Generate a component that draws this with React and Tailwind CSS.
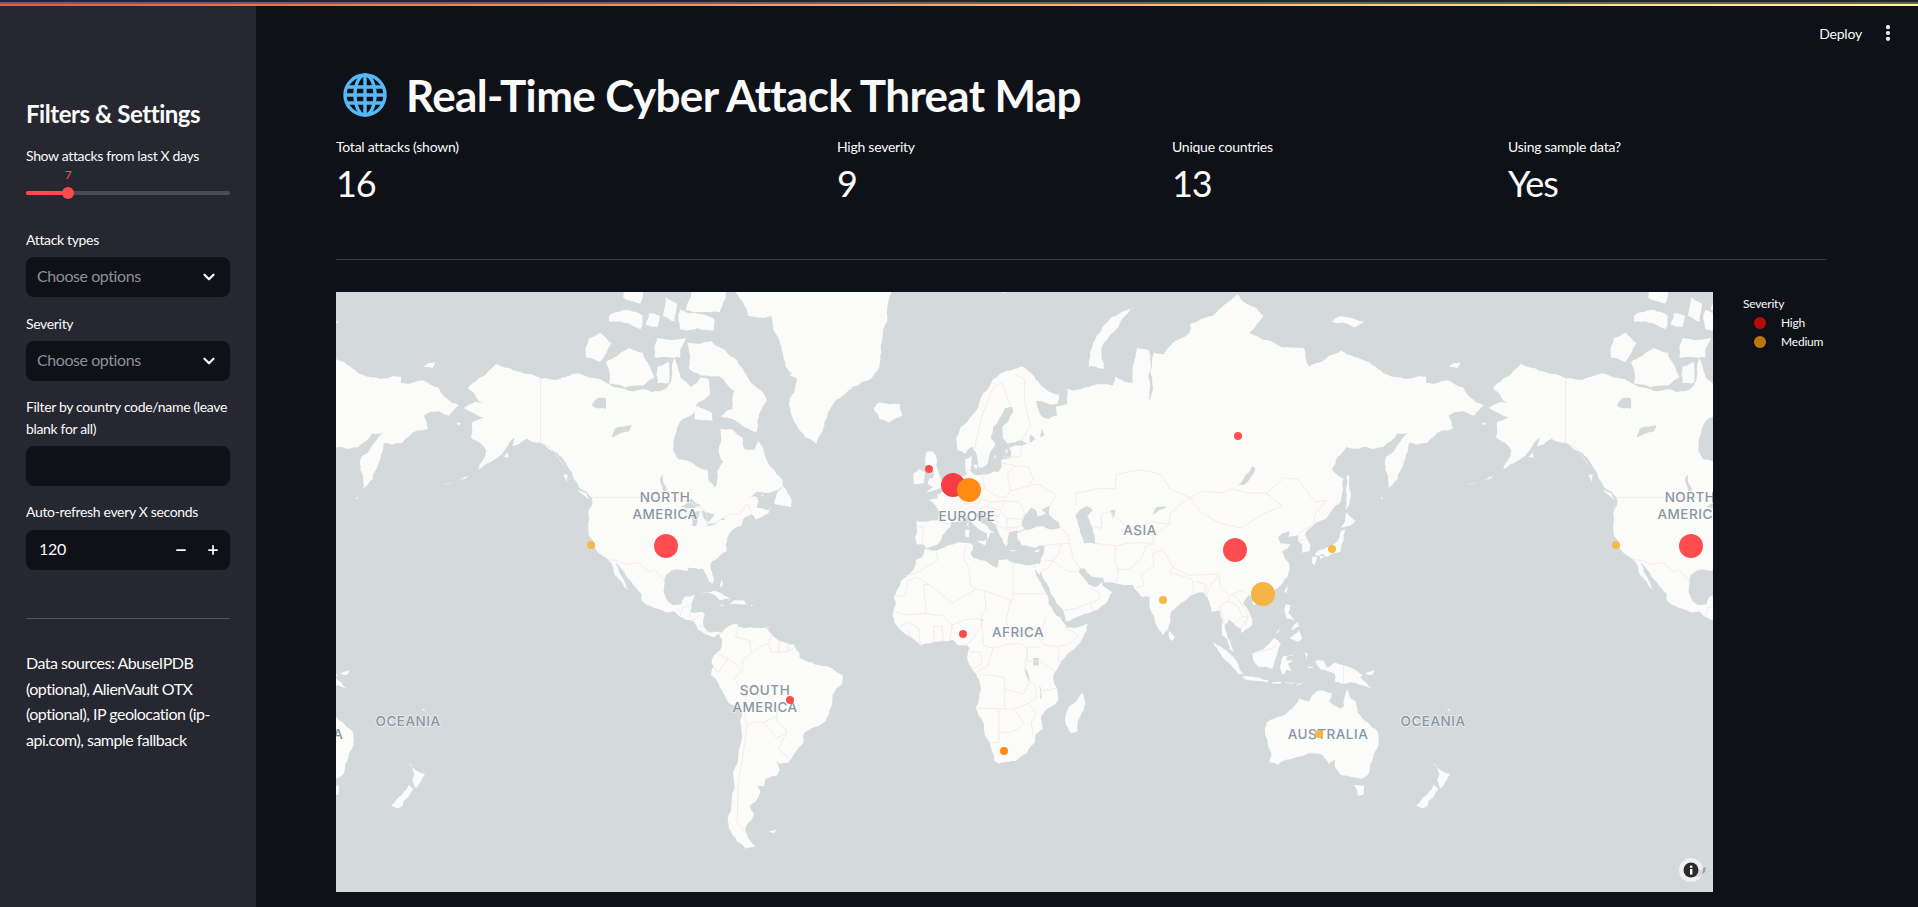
import React from 'react';
import { ChevronDown, EllipsisVertical, Minus, Plus } from 'lucide-react';

// map projection, fitted to the reference (web mercator, 1025px per world)
const WORLD = 1025;
const px = (lon) => 606 + (lon * WORLD) / 360;
const py = (lat) => 366 - (WORLD / (2 * Math.PI)) * Math.log(Math.tan(Math.PI / 4 + (lat * Math.PI) / 360));

// small seeded generator so the coastlines come out the same every run
let seed = 12345;
const rnd = () => {
  seed = (seed * 1103515 + 12345) % 2147483648;
  return seed / 2147483648;
};

// midpoint displacement: long straight coast segments get a natural wobble
const roughen = (pts, depth) => {
  let cur = pts;
  for (let d = 0; d < depth; d++) {
    const next = [];
    cur.forEach((a, i) => {
      const b = cur[(i + 1) % cur.length];
      next.push(a);
      const dx = b[0] - a[0];
      const dy = b[1] - a[1];
      const len = Math.hypot(dx, dy);
      if (len > 4) {
        const off = (rnd() - 0.5) * 0.2;
        next.push([(a[0] + b[0]) / 2 - dy * off, (a[1] + b[1]) / 2 + dx * off]);
      }
    });
    cur = next;
  }
  return cur;
};

const toXY = (pts) => pts.map(([lon, lat]) => [px(lon), py(lat)]);
const line = (pts) => pts.map(([x, y], i) => `${i ? 'L' : 'M'}${x.toFixed(1)} ${y.toFixed(1)}`).join('');

const land = [
  // north america
  [[-168,65.6],[-164,66.5],[-161.5,66.3],[-163.5,67.1],[-166.5,68.3],[-163,69.5],[-156.5,71.3],[-152,70.8],[-146,70.1],[-141,69.6],[-135,69.4],[-128,70.2],[-125,69.8],[-120,69.5],[-115,68.5],[-110,68],[-105,68.2],[-102,67.8],[-97,68.3],[-95,69.5],[-94,72],[-92,69.8],[-88,68.5],[-85,69.7],[-82,69.5],[-81.5,67.5],[-86,66.3],[-87,65],[-91,64],[-94,61],[-94.5,58.8],[-92.5,57],[-88,56.5],[-85,55.3],[-82.3,55],[-82,52.8],[-80,51.3],[-79,52],[-79,54.7],[-76.8,56.5],[-78.5,58.8],[-77.5,60.5],[-78,62.4],[-73.5,62.3],[-70,61],[-69.5,59],[-66,58.8],[-64.5,60.3],[-62,57.5],[-60,55.5],[-56,53],[-56,51.5],[-60,50.2],[-65,50.3],[-68,49],[-65,49.1],[-64.5,48],[-65,46.5],[-61,46],[-60,46.8],[-61,45.2],[-65.5,43.6],[-66,44.5],[-67,45],[-70,43.7],[-70.5,42],[-74,40.6],[-75.5,38.5],[-76,37],[-75.5,35.3],[-78,33.9],[-81,32],[-81.3,30],[-80,26.8],[-80.5,25.2],[-81.8,26],[-82.8,28],[-84,30],[-85.5,29.7],[-89,30.3],[-89.5,29.2],[-91.5,29.5],[-94,29.6],[-97,28],[-97.5,25],[-97.8,22.5],[-96,19.2],[-94.5,18.2],[-91.5,18.5],[-90.5,21],[-87,21.5],[-88,18.5],[-88.5,16],[-84,15.9],[-83.3,15],[-83.7,11],[-82,9],[-80,9.2],[-77.5,8.7],[-77.8,7.3],[-78.5,8.5],[-80,7.3],[-83,8.3],[-85.7,10],[-87.5,13],[-91,14],[-94,16.1],[-97,15.8],[-101.5,17.5],[-105.5,20],[-105.5,22],[-109,25.8],[-112.7,30],[-114.7,31.7],[-113,28.2],[-110,23.2],[-112,25],[-115,28],[-117.1,32.5],[-120.5,34.5],[-122.5,37.8],[-124.2,40.4],[-124,46],[-122.7,48],[-123,49],[-127,51],[-130,54.5],[-133,57],[-136,58.5],[-140,59.8],[-146,60.8],[-151,59.5],[-150,61],[-154,58.5],[-158,56.7],[-163,54.9],[-160,58.7],[-162,60],[-165.5,61],[-165,63.5],[-161,64.2]],
  // greenland and arctic canada
  [[-73,78.2],[-68,76],[-60,76],[-55,71],[-51,69.5],[-53.5,67],[-51,63],[-48,61],[-44,59.9],[-42,62],[-40,65],[-33,68],[-25,69.5],[-22,71],[-21,74],[-19,77],[-18,80],[-40,83],[-60,82.5]],
  [[-53.5,70],[-51,69.6],[-52,70.6]],
  [[-65,61.9],[-72,63.5],[-77.8,64.3],[-73.5,65.5],[-73,68],[-78,69.8],[-85,70],[-89,70.8],[-89.5,73.5],[-81,73.7],[-72,71.7],[-67,69],[-61.5,66.7],[-64,65]],
  [[-117,69],[-105,68.7],[-101,69.7],[-105,72.5],[-110,73],[-118,71.5]],
  [[-125,72],[-120,71.5],[-116,73.5],[-120,74.5],[-124,74]],
  [[-117,75.5],[-106,74.8],[-105,76],[-110,76.5],[-117,76]],
  [[-101,72],[-92,72],[-90,74],[-100,74]],
  [[-92,74.8],[-80,74.7],[-80,75.7],[-92,76.5]],
  [[-90,76.5],[-78,76.3],[-75,78.5],[-62,82],[-75,83.2],[-92,81.5],[-88,78.5]],
  [[-98,76],[-94,75.5],[-93,77],[-97,77.5]],
  [[-104,75.2],[-100,75],[-99,76],[-103,76.2]],
  [[-112,77.5],[-106,77],[-104,78.5],[-112,78.5]],
  [[-100,69],[-96,69],[-96,71.5],[-100,71]],
  [[-87,64],[-80.5,63.7],[-81,65],[-86,66]],
  [[-59,47.7],[-53,46.7],[-52.8,48.5],[-55.8,51.6],[-57.5,50.5]],
  [[-128,50.7],[-123.5,48.4],[-125,50]],
  [[-133,54],[-131.5,54],[-131.5,52.3]],
  [[-64.5,49.9],[-61.7,49.3],[-63,49.3]],
  [[-154,57.5],[-152.5,58.3],[-152.3,57.3]],
  [[-176,52],[-172,52.4],[-174,51.9]],
  [[-170,53],[-166,54],[-167,53.3]],
  [[-170.5,63.5],[-168.7,63.3],[-170,63]],
  [[-24,65.5],[-22,64],[-18.5,63.4],[-14,64.5],[-14.7,66.2],[-18,66.2],[-22,66.4]],
  [[-85,21.9],[-80,23],[-74.2,20.2],[-78,19.9],[-82,22.4]],
  [[-74.4,18.5],[-68.5,18.5],[-69.5,19.8],[-73,20]],
  [[-78.3,18.2],[-76.3,18],[-77,18.5]],
  [[-67.2,18],[-65.7,18.2],[-67,18.5]],
  [[-78,24],[-77.5,26.5],[-77,25]],
  // eurasia
  [[-9.5,38.7],[-8.9,41.5],[-9.2,43.2],[-4,43.4],[-1.5,43.5],[-1.2,46],[-4.7,48.4],[-1.5,48.7],[-1.5,49.7],[1.5,50.5],[3.5,51.4],[4.8,53],[7,53.6],[8.7,54],[8.2,56],[8.2,57],[10.6,57.7],[10.3,56],[10,54.7],[11,54],[14,54],[18.5,54.7],[19.8,54.5],[21,55.5],[21,57],[24,57.2],[24.3,58.3],[23.5,59.2],[28,59.6],[30,60],[28,60.5],[23,59.9],[21.3,61],[21.3,62.8],[25,65],[24.5,65.8],[22,65.6],[18,62.8],[17.2,60.8],[18.8,59.8],[16.5,57.5],[16,56.2],[14.3,55.5],[13,55.4],[12.7,56.3],[11.2,58.8],[10.6,59.4],[8,58.1],[5.5,58.8],[5,61],[6.5,62.7],[10.5,64.5],[14,67.3],[18,69.5],[23,70.5],[28,71],[31,70.3],[33,69.4],[41,67.5],[40.5,66.2],[34.5,66.6],[33,66.6],[35,64.3],[37.5,64],[40.5,64.6],[40,65.8],[44,66.2],[44,68.3],[46.5,68],[53,68.7],[60,68.7],[61,69.8],[67,69],[67,71],[68.5,73],[72.5,72.8],[72.5,70],[72.5,66.5],[74,68],[74.5,72.5],[78,72.3],[81,73.5],[87,74.5],[87,75.3],[95,76],[104,77.7],[107,77],[113,76],[108,74.5],[113,73.8],[118,73.3],[127,73],[129,71],[133,71.5],[140,72.7],[150,71.5],[160,69.7],[170,69.8],[170,69],[178,69.3],[183,68.5],[186,67],[190.3,66],[187,64.5],[183,65.2],[180,65],[178,64.5],[179.5,62.5],[174,61.8],[170.3,60],[164,60],[163,58],[162,56],[160,53],[156.7,51],[155.7,55],[156,57.5],[161,60.3],[163.5,61.7],[160,61.7],[155,59.3],[148,59.3],[142,59.3],[137,55],[141,53.2],[140.5,50],[140,48],[135,44],[132,43.2],[130.6,42.3],[127.5,39.8],[129.4,37],[129.2,35.2],[126.4,34.5],[126.5,37],[125,38],[125,39.6],[121.5,39],[122,40.7],[118,39],[119,37.3],[122.5,37],[119.5,35],[121.8,31.7],[122,29.5],[119.7,25.5],[116,22.9],[113.5,22.2],[110,20.4],[108,21.6],[105.8,19],[109,13.5],[109,11.5],[105,8.7],[105,10.3],[102.5,12],[100.9,13.4],[99.3,11.5],[100,8.5],[103.5,1.5],[101,3],[100.2,6.5],[98.3,8],[98.7,13],[97.5,16.5],[94.5,16],[94,19],[91.5,22.5],[89,22],[87,21.3],[85,19.5],[80.3,15.7],[80.2,12.5],[79.5,10.3],[77.5,8.1],[75,12],[73,17],[72.8,21],[70.3,20.9],[69,22.4],[67,24.8],[61.5,25.2],[57,25.7],[56.5,27.1],[52.5,27.5],[50,30],[48.5,30],[48,29],[50,26.7],[51.5,25],[54,24.1],[56.3,26],[56.5,24.5],[59.8,22.5],[57.7,19],[55,17],[52,15.7],[45,12.8],[43.4,12.7],[42.7,16],[39,21],[37,25],[35,28],[34.9,29.5],[34.2,28],[33,29.5],[32.5,30],[32.3,31.2],[34.3,31.3],[35.8,34.7],[36,36.8],[33,36.1],[30.5,36.5],[28,36.7],[26.5,38.5],[26.3,40],[29,41],[31.5,41.2],[35,42],[38,41],[41.5,41.5],[41,43],[37.5,45],[38,47],[35,46],[36.5,45.2],[33.5,44.5],[33,46],[31,46.5],[29,44.8],[28,42.5],[29,41.2],[27,40.5],[26,40.8],[23.5,40.5],[23,38],[22.8,36.5],[21.5,37.5],[19.5,41],[19,42.3],[15,44.5],[13.7,45.6],[12.3,45.2],[12.5,44],[16,41.9],[18.5,40],[17,40.4],[16,38],[15.8,40],[12.5,41.4],[10.5,43],[8.7,44.4],[6,43.1],[3.2,43.2],[3,41.8],[0,39.5],[-0.5,38],[-2,36.8],[-5.5,36],[-6.5,37],[-8.9,37]],
  // africa
  [[-5.9,35.8],[-2,35.2],[3,36.9],[10,37.3],[11,36.8],[10,34.3],[11,33.2],[15,32.4],[19.5,30.3],[20,32.5],[23,32.7],[29,31],[32.3,31.2],[32.6,29.9],[34,26.5],[35.5,24],[37.3,21],[37.5,18.5],[39.5,15.5],[43,12],[44,10.5],[51.2,11.9],[50.8,9.5],[47.5,4.5],[42,-1],[39.5,-5],[39,-7],[40.5,-11],[40.6,-15],[36,-18.5],[34.8,-20],[35.5,-24],[32.8,-26],[32.5,-28.5],[30,-31.5],[26,-34],[20,-34.8],[18.3,-34],[17,-29.5],[15,-26],[14.5,-22],[11.8,-17],[13.7,-11],[12,-5.5],[9,-1],[9.7,3.5],[8.5,4.6],[5.5,4.5],[4,6.3],[1,5.9],[-4,5.2],[-7.7,4.4],[-13,8.5],[-16.8,12.5],[-17.4,14.7],[-16.2,19],[-17,21],[-14.5,26],[-11,28.7],[-9.7,30],[-9.2,32.5],[-6.5,34.2]],
  // south america
  [[-77.5,8.7],[-75.5,10.7],[-72,12],[-71.5,10.8],[-68,10.6],[-64,10.5],[-62,10.7],[-60,8.5],[-57,6],[-52,4.8],[-50,1.5],[-50,0],[-48,-1],[-44,-2.5],[-40,-3],[-37,-5],[-35,-6],[-35,-9],[-38.5,-13],[-39,-17],[-40.7,-21.5],[-43,-23],[-46,-24],[-48.7,-26],[-48.7,-28.5],[-52,-32],[-54,-34.5],[-57,-34.8],[-58.5,-34],[-57,-36.5],[-57.7,-38],[-62,-39],[-62.5,-41],[-65,-41],[-63.7,-42.5],[-65.5,-45],[-67.5,-46],[-66,-48],[-69,-51],[-68.5,-52.5],[-65.5,-55],[-69,-55.5],[-72,-54],[-75,-51],[-74,-46],[-73,-42],[-73.5,-37.5],[-71.5,-32],[-70.3,-25],[-70.2,-18.5],[-75,-15.5],[-77,-12],[-79,-8],[-81.2,-6],[-80.2,-3],[-81,-1],[-80,1],[-78.8,2],[-77.3,4],[-77.5,7],[-77.8,7.3]],
  [[-61,10.2],[-60.9,10.8],[-61.7,10.7]],
  [[-61,-51.8],[-58,-51.5],[-59,-52.3]],
  // europe islands
  [[-5.5,50],[1.4,51.2],[1.7,52.7],[0,53],[-1.5,55],[-2,56],[-2,57.6],[-3.5,58.6],[-5.2,58.5],[-6,57],[-5,55],[-3,54.8],[-3,53.4],[-4.5,53.2],[-5,52],[-3,51.4]],
  [[-10,52],[-6.3,52.2],[-6,54.5],[-8,55.2],[-10,54.2]],
  [[12,78],[22,77.8],[28,80],[16,80]],
  [[51.5,71],[57,70.7],[56,73],[62,75],[68,76.8],[63,76.3],[54,74],[52,72]],
  [[12.5,38],[15.6,38.2],[15.1,36.7]],
  [[8.2,41],[9.7,41],[9.5,39],[8.5,39]],
  [[8.6,42.5],[9.5,43],[9.3,41.5]],
  [[23.5,35.5],[26.3,35.2],[24.5,35]],
  [[32.3,35],[34.5,35.6],[33.5,34.7]],
  [[11,56],[12.5,56],[12,55]],
  [[22,58.5],[23,59],[23,58.2]],
  [[18.2,57.4],[19,57.9],[18.8,57.2]],
  // asia islands
  [[142,46],[143.5,49],[143,54],[142,53.5],[142,50]],
  [[140,41.6],[143.2,42],[145.3,43.3],[142,45.5],[141.5,43]],
  [[130.9,34],[135.5,33.5],[140,35],[141,38],[141.5,41.2],[140,40.5],[139,38],[136,36.5],[133,35.5]],
  [[130,33.5],[131.8,33.4],[131,31],[130,31.5]],
  [[132.5,34],[134.5,34.2],[134,33.3],[132.8,32.8]],
  [[147,44.5],[148.5,45.3],[147.5,44.8]],
  [[154,48.8],[155,49.3],[154.5,48.6]],
  [[120.2,23],[121.6,25.2],[121,22]],
  [[108.7,19.3],[110.5,20],[110.5,18.7],[109.5,18.2]],
  [[120.3,16],[120.7,18.5],[122.3,18.3],[121.7,15.5],[124,13],[121,13.7]],
  [[122,7],[125.5,9.8],[126.5,7],[125,5.7]],
  [[122.5,10],[123.5,11.5],[125,12.5],[125.5,11],[123.5,10]],
  [[117.2,8.3],[119.5,11.3],[118,9]],
  [[109,1.5],[113,3.2],[116.8,7],[119,5],[117.7,1],[116,-3.8],[111,-3],[109.2,0]],
  [[95.3,5.6],[98,4],[103.5,-1],[106,-5.8],[104,-5.7],[100.5,-1.5],[97,2.5]],
  [[105.3,-6.5],[108.5,-6.5],[114.5,-7.7],[114.4,-8.7],[106.5,-7.5]],
  [[116,-8.5],[119,-8.3],[119,-9],[116,-9]],
  [[120,-8.5],[125,-8.2],[123,-9]],
  [[124,-10],[127,-8.4],[125,-9.5]],
  [[119.3,-5.5],[118.8,-2.5],[120,0.7],[124.9,1.5],[121,0.3],[121,-1],[123.3,-1],[121.5,-2],[122.7,-4.5],[121,-4],[120.4,-5.6]],
  [[127.5,2],[128.5,1.5],[128,-0.7]],
  [[128,-3],[130.8,-3.4],[129,-3.5]],
  [[131,-1],[134,-0.8],[135,-3.3],[138,-1.7],[144.5,-3.8],[147.8,-6],[147,-6.8],[150.8,-10.5],[147,-9.5],[143.5,-8.5],[141,-9.1],[138,-8.3],[138,-5.5],[133,-4],[132,-2.8]],
  [[148.5,-5.5],[152,-4.2],[151,-6]],
  [[79.8,9.5],[81.8,7.5],[80.7,6],[79.8,7]],
  [[137,75.5],[145,75],[150,75.5],[140,76]],
  [[96,78],[105,78],[100,79.5]],
  [[178,71],[182,71.5],[181,70.8]],
  // oceania
  [[114,-22],[113.5,-26],[115.7,-32],[115,-34.4],[118,-35],[124,-33],[129,-31.6],[134,-32.5],[135.8,-35],[138,-33.5],[138,-35.6],[140,-38],[144,-38.5],[147,-39],[150,-37.5],[151.5,-33],[153.5,-28],[153,-25],[149.5,-22],[146,-19],[145.3,-15],[143.5,-14],[142.5,-10.8],[141.6,-13],[141,-17],[139.5,-17.5],[136,-15.2],[136.8,-12.2],[132.5,-11.3],[130,-13],[129,-15],[125.5,-14],[122.2,-18],[117,-20.6]],
  [[144.7,-40.7],[148.3,-40.9],[148,-43.2],[146,-43.5]],
  [[172.7,-34.5],[175.5,-36.8],[178.4,-37.7],[177,-39.7],[175.3,-41.6],[173.9,-39.3],[174.7,-37.5]],
  [[172.7,-40.6],[174.3,-41.7],[171,-44.7],[170.7,-45.9],[168.5,-46.6],[166.5,-45.9],[170.5,-43]],
  [[49.3,-12],[50.4,-15.5],[47.7,-24.8],[45.2,-25.5],[43.5,-23],[44.4,-17],[46.5,-15.7]],
  [[164,-20.2],[167,-22.3],[166,-21.8]],
  [[178,-17.5],[178.6,-18.2],[177.3,-18]],
];

const lakes = [
  [[47,45],[51,47],[53,46],[51,44.5],[53,41.5],[54,37],[50,37.3],[49,39.5],[47.7,43]],
  [[104,51.7],[109,55.7],[110,55.3],[106,51.8]],
  [[59,46],[61,46],[60,44]],
  [[74,45],[79,46.8],[75,46.5]],
  [[31,60],[32.8,60.7],[31,61.5]],
  [[34.5,61],[36,61.5],[35,62.5]],
  [[-92,46.8],[-88,48.8],[-84.7,47],[-87,46.5]],
  [[-87.8,42],[-86.3,42],[-85,45.8],[-87.5,45.5]],
  [[-84.5,46],[-80,45],[-82,43],[-83.7,44]],
  [[-83.3,41.7],[-79,42.8],[-82,42.5]],
  [[-79.5,43.4],[-76.3,43.5],[-76.5,44.2]],
  [[-98,50.5],[-96.5,50.5],[-98,54],[-99,53.3]],
  [[-123,66],[-118,65.5],[-118,67],[-121,67]],
  [[-116,61],[-110,62],[-109,63],[-115,62.5]],
  [[32,0],[34,0],[33.8,-2.8],[32,-2.5]],
  [[29.3,-4],[29.8,-4],[30.8,-8],[30.3,-8]],
  [[34.3,-9.5],[35,-14],[34.4,-14]],
  [[13.5,13.5],[14.6,13.5],[14,12.6]],
];

const borders = [
  [[-123,49],[-95,49],[-89,48],[-84.5,46.5],[-82.5,45],[-82.5,42.5],[-79,43],[-76,44.5],[-74.5,45],[-71,45],[-69,47.3],[-67.5,47],[-67,45]],
  [[-141,69.6],[-141,60.2],[-137,59],[-133,56]],
  [[-117.1,32.5],[-114.8,32.5],[-111,31.3],[-106.5,31.7],[-103,29],[-101,29.7],[-97.3,25.9]],
  [[-92,14.6],[-91,17.5],[-89,17.8],[-88.3,18.4]],
  [[-89,14],[-88.3,15.7]],[[-87.5,13],[-85,15]],[[-85.7,11],[-83.7,11]],[[-83,8.3],[-82.8,9.6]],
  [[-71.5,11],[-72.5,7.5],[-67.5,6],[-67,1.5]],[[-67,1.5],[-70,-0.5],[-70,-4.2]],
  [[-78.8,1.4],[-75,-0.2],[-70,-4.2]],[[-80.2,-3.4],[-78.5,-5],[-75.2,-0.2]],[[-70,-4.2],[-73,-7],[-70.5,-11]],
  [[-69,-11],[-69,-17],[-69.5,-17.5]],[[-69.5,-11],[-65.4,-10],[-60,-13.8],[-58,-16.5],[-58,-20]],
  [[-58,-20],[-62.5,-22],[-66,-22],[-68.5,-23]],[[-69.5,-17.5],[-68.5,-23],[-70,-33],[-71.5,-40],[-72,-50],[-69,-52]],
  [[-58,-20],[-58,-22],[-55,-24],[-54.6,-25.5],[-58,-27.2],[-62.5,-22]],[[-54.6,-25.5],[-57.6,-30.2],[-53.5,-33.5]],
  [[-60,8.5],[-60.8,5.2],[-60,2],[-56.5,2],[-54,2.3],[-51.6,4]],[[-67,1.5],[-64,4],[-60.8,5.2]],[[-57,6],[-57.5,2]],[[-54,5.5],[-54,2.3]],
  // africa
  [[-2,35],[-1.5,32.5],[-8.7,28.7],[-13,27.7]],[[-8.7,27.3],[-12,26],[-13,21.3],[-17,21.3]],
  [[-8.7,27.3],[-4.8,25],[1,21],[3.3,19],[4.2,19.2],[12,23.5]],[[-4.8,25],[-6.5,25],[-5.5,15.5]],[[8.5,37],[7.5,33],[9.5,30],[10,24.5],[12,23.5]],
  [[25,32],[25,20]],[[25,20],[24,19.5],[24,20],[15,23],[12,23.5]],[[25,22],[37,22]],[[24,19.5],[22.5,13],[23.5,9]],
  [[15,23],[15.5,16.5],[13.5,14]],[[3.5,11.5],[8,13.3],[13.5,13.7]],[[2.7,6.3],[3.7,11.7]],[[8.5,4.6],[11,7],[13.5,11],[14,13]],
  [[-16.5,16],[-12,15],[-5.5,15.5],[-3,15],[0,14.9],[3.5,11.5]],[[-12,12.5],[-8,10.3],[-8,7.8],[-7.5,4.4]],[[-2.8,5],[-3,11],[0,11],[0.5,6]],
  [[-15,11],[-12,12.5]],[[-12,10],[-10.5,7]],[[23.5,9],[33,10],[35,10]],[[36.5,14.3],[35,10],[34,7],[36,4.5],[41,4],[45,5],[48,8],[43,11]],
  [[41,4],[41,-1.7]],[[34,-1],[37.5,-3],[39.3,-4.7]],[[34,4],[30,3.5],[30,-1.2],[34,-1]],[[14.5,4.5],[18,3.5],[24,5],[27.5,5]],[[14.5,4.5],[14,12]],
  [[27.5,5],[30,3.5],[29,-4.5],[30.7,-8.3],[28.7,-12.5],[22,-11],[22,-7],[17,-6],[13,-5.8]],[[18,3.5],[16,-3],[12,-5]],[[9.8,2.2],[13.5,2.2],[14,-2],[11,-3.7]],
  [[12,-17.3],[23.5,-17.7],[25,-17.8]],[[22,-11],[22,-17.5]],[[30.7,-8.3],[33,-9.5],[33,-14],[30.3,-15.7],[25,-17.8]],[[34.7,-11.6],[40.5,-10.5]],
  [[30.3,-15.7],[33,-19],[31.3,-22.3]],[[20,-18],[20,-25],[23,-25.5],[26,-24.5],[29,-22.3],[25.5,-18]],[[20,-25],[20,-28.5],[16.5,-28.5]],[[31.3,-22.3],[32,-26]],
  // europe
  [[-1.7,43.3],[3.2,42.4]],[[-8.8,41.9],[-6.5,41.7],[-7,37.2]],[[2.5,51],[6,49.5],[8,49],[7.5,47.6],[6,46.2],[7.5,43.8]],[[7,53.3],[6,50.8],[6,49.5]],
  [[14.2,54],[15,51],[12,50.3],[13.8,48.7],[13,47.5],[7.5,47.6]],[[23,54.2],[24,50.5],[22.5,49],[19,49.4],[15,51]],[[7.5,43.8],[7,45.9],[10.5,46.8],[13.7,46.5],[13.7,45.6]],
  [[13.8,48.7],[17,48],[16,46.8],[13.7,46.5]],[[17,48],[22.5,48.2],[20,46],[16,46.8]],[[22.5,48.2],[27,48],[29,45.4],[28,43.8],[23,44],[20,46]],
  [[15.5,45.5],[19,45],[19.5,42],[23,41],[26.2,41.7]],[[23,44],[22.5,41.5],[26.2,41.7],[28,42]],[[26.2,41.7],[26.3,40.8]],[[24,50.5],[30,51.5],[34,52],[40,49.6],[38,47]],
  [[23,54.2],[26,55.8],[30.5,55.5],[32,53],[30,51.5]],[[21,56.3],[26,55.8]],[[21.5,57.5],[27.5,57.5],[28,59.5]],[[28,60.5],[31,63],[29,66.5],[29,69.5],[26,70]],
  [[11.5,59],[12.5,61.5],[14,64.5],[18,68.5],[21,69]],[[21,69],[24,66]],[[8.7,54.9],[10,54.8]],
  // asia
  [[36,36.8],[42,37.2],[44.8,37.3]],[[41.5,41.5],[44,40],[44.8,37.3]],[[44.8,37.3],[46,33],[48.5,30]],[[42,37.2],[41,34.3],[39,32.3],[36,32.5]],[[35,29.4],[37.5,30],[39,32.3],[44,29],[48,29]],
  [[43,16.5],[47,17],[52,19],[55,20],[55.7,22],[52,24]],[[52,19],[53,16.6]],[[61,36.6],[60.8,34],[61,31.5],[62,29.5],[61,25]],[[61,29.5],[66,29.8],[70,33],[71.5,36.5],[74.5,37.2]],
  [[68,24],[71,24.5],[70,28],[74.5,31],[74,34.5],[77.8,35.5]],[[53.8,37.3],[61,36.6],[66,37.4],[70,37.5],[74.5,37.2]],[[53,42],[56,41.3],[56,45],[59,45.6],[61,44.5],[66,41],[70,42],[74,43],[80,42.5]],
  [[47,47],[47,50],[55,51],[61,51],[61,54],[70,55],[77,54],[80,51],[87,49]],[[80,42.5],[80,45],[83,47],[87,49]],[[74.5,37.2],[74,39.5],[80,42.5]],
  [[87,49],[92,50.5],[98,50],[102,51],[107,50],[114,50],[119.5,47],[112,44.8],[105,41.5],[97,42.8],[91,45.5],[87,49]],[[114,50],[120,53.3],[125,53],[131,48],[135,48.3],[131,45],[130.6,42.3]],
  [[130.6,42.3],[125,40]],[[125,38],[128.4,38.6]],[[77.8,35.5],[81,30.5],[86,28],[92,28],[97,28.3]],[[81,30.5],[80,28.8],[88,26.5]],[[88,26],[88.5,22]],[[89,26],[92.5,25],[92.5,21]],
  [[97,28.3],[98,24],[101,21.5]],[[97,28],[94,24],[92.5,21]],[[101,21.5],[105,23],[108,21.6]],[[102,22],[105,19],[107.5,15],[106.5,11]],[[101,21],[100.5,19.5],[97.5,18],[99,12]],
  [[100.5,19.5],[104,18],[105.5,14.3],[102.5,12]],[[105.5,14.3],[107.5,14.5],[105,10.5]],[[100.2,6.5],[102,6]],[[109.6,2],[115,3],[117.5,4.2]],[[141,-2.6],[141,-9.1]],
];

const landPath = land.map((p) => line(roughen(toXY(p), 4)) + 'Z').join('');
const lakePath = lakes.map((p) => line(roughen(toXY(p), 2)) + 'Z').join('');
const borderPath = borders.map((p) => line(toXY(p))).join('');

// bubbles and labels in page pixels, minus the map origin (336, 292)
const bubbles = [
  { x: 593, y: 177, r: 4, c: '#ff4d4f' },
  { x: 617, y: 193, r: 12, c: '#f83c46' },
  { x: 633, y: 198, r: 12, c: '#ff8a14' },
  { x: 330, y: 254, r: 12, c: '#ff4d4f' },
  { x: 1355, y: 254, r: 12, c: '#ff4d4f' },
  { x: 255, y: 253, r: 4, c: '#f7b84a' },
  { x: 1280, y: 253, r: 4, c: '#f7b84a' },
  { x: 627, y: 342, r: 4, c: '#ff4d4f' },
  { x: 454, y: 408, r: 4, c: '#ff4d4f' },
  { x: 668, y: 459, r: 4, c: '#ff8a14' },
  { x: 902, y: 144, r: 4, c: '#ff4d4f' },
  { x: 899, y: 258, r: 12, c: '#ff4d4f' },
  { x: 927, y: 302, r: 12, c: '#f6b444' },
  { x: 996, y: 257, r: 4, c: '#fbb93f' },
  { x: 827, y: 308, r: 4, c: '#f9b843' },
  { x: 983, y: 442, r: 4, c: '#f9b843' },
];

const mapLabels = [
  ['NORTH', 329, 205], ['AMERICA', 329, 222], ['NORTH', 1354, 205], ['AMERICA', 1354, 222],
  ['EUROPE', 631, 224], ['SOUTH', 429, 398], ['AMERICA', 429, 415], ['AFRICA', 682, 340],
  ['ASIA', 804, 238], ['OCEANIA', 1097, 429], ['OCEANIA', 72, 429], ['AUSTRALIA', 992, 442], ['AUSTRALIA', -33, 442],
];

function WorldMap() {
  return (
    <svg viewBox="0 0 1377 600" className="block w-[1377px] h-[600px] shrink-0 bg-[#d4dadc]">
      {[-WORLD, 0, WORLD].map((dx) => (
        <g key={dx} transform={`translate(${dx} 0)`}>
          <path d={landPath} fill="#fbfbf9" />
          <path d={lakePath} fill="#d4dadc" />
          <path d={borderPath} fill="none" stroke="#f5e8e7" strokeWidth="0.9" strokeLinejoin="round" />
        </g>
      ))}
      {mapLabels.map(([t, x, y], i) => (
        <text
          key={i}
          x={x}
          y={y}
          textAnchor="middle"
          dominantBaseline="central"
          fontFamily="Inter, sans-serif"
          fontSize="13.5"
          fontWeight="500"
          letterSpacing="0.5"
          fill="#8896a4"
          stroke="#ffffff"
          strokeOpacity="0.55"
          strokeWidth="1.5"
          paintOrder="stroke"
        >
          {t}
        </text>
      ))}
      {bubbles.map((b, i) => (
        <circle key={i} cx={b.x} cy={b.y} r={b.r} fill={b.c} />
      ))}
      {/* attribution button */}
      <path d="M1348 585h15l6-5 1-5z" fill="#9aa0a2" />
      <circle cx="1355" cy="578" r="12" fill="#ffffff" fillOpacity="0.6" />
      <circle cx="1355" cy="578" r="7.5" fill="#2b2b2b" />
      <rect x="1354" y="577" width="2.4" height="5.5" fill="#fff" />
      <rect x="1354" y="573.6" width="2.4" height="2.2" fill="#fff" />
    </svg>
  );
}

function SelectBox() {
  return (
    <div className="mt-[7px] h-10 rounded-lg bg-[#0e1117] flex items-center justify-between pl-[11px] pr-[12px] pb-[2px]">
      <span className="text-[16px] tracking-[-0.43px] text-[#8d8f96]">Choose options</span>
      <ChevronDown size={18} strokeWidth={3} className="text-[#fafafa] mt-[2px]" />
    </div>
  );
}

const metrics = [
  ['Total attacks (shown)', '16'],
  ['High severity', '9'],
  ['Unique countries', '13'],
  ['Using sample data?', 'Yes'],
];

export default function App() {
  return (
    <div className="h-[907px] flex flex-col overflow-hidden bg-[#0e1117] text-[#fafafa] font-['Lato','Liberation_Sans',sans-serif]">
      {/* top decoration */}
      <div className="h-[6px] shrink-0 flex flex-col">
        <div className="h-[2px] bg-[#24252c]" />
        <div className="h-[2px] bg-[#62636d]" />
        <div className="h-[2px] bg-gradient-to-r from-[#ff4b4b] to-[#fffd80]" />
      </div>
      <div className="flex flex-1 min-h-0">
        {/* sidebar */}
        <aside className="w-[256px] shrink-0 bg-[#262730] px-[26px] pt-[92px] text-[14px] tracking-[-0.34px]">
          <h2 className="text-[24px] leading-8 font-bold tracking-[-0.45px]">Filters &amp; Settings</h2>
          <div className="mt-4 h-5 leading-5">Show attacks from last X days</div>
          <div className="mt-[2px] ml-[36px] w-3 h-[14px] leading-[14px] text-center text-[12px] text-[#ff4b4b]">7</div>
          <div className="relative mt-[9px] h-1 rounded-full bg-[#4a4b56]">
            <div className="h-1 w-[42px] rounded-full bg-[#ff4b4b]" />
            <div className="absolute left-[36px] top-[-4px] w-3 h-3 rounded-full bg-[#ff4b4b]" />
          </div>
          <div className="mt-[35px] h-5 leading-5">Attack types</div>
          <SelectBox />
          <div className="mt-[17px] h-5 leading-5">Severity</div>
          <SelectBox />
          <div className="mt-[15px] leading-[22px]">Filter by country code/name (leave blank for all)</div>
          <div className="mt-[6px] h-10 rounded-lg bg-[#0e1117]" />
          <div className="mt-4 h-5 leading-5">Auto-refresh every X seconds</div>
          <div className="mt-2 h-10 rounded-lg bg-[#0e1117] flex items-center pl-[13px] pr-[10px] text-[16px]">
            <span className="flex-1 pb-[2px]">120</span>
            <Minus size={14} strokeWidth={3} className="mr-[18px]" />
            <Plus size={14} strokeWidth={3} />
          </div>
          <div className="mt-12 h-px bg-[#52535c]" />
          <p className="mt-[31px] text-[16px] leading-[25.6px] tracking-[-0.5px]">
            Data sources: AbuseIPDB (optional), AlienVault OTX (optional), IP geolocation (ip-api.com), sample fallback
          </p>
        </aside>

        {/* main */}
        <main className="flex-1 min-w-0 pl-[80px] pr-[92px]">
          <header className="h-[54px] flex items-center justify-end -mr-[92px] pr-[20px]">
            <span className="text-[14px] tracking-[-0.2px] mr-[16px]">Deploy</span>
            <EllipsisVertical size={20} strokeWidth={3} />
          </header>
          <div className="h-[70px] flex items-center">
            <svg viewBox="0 0 44 44" className="w-[44px] h-[44px] ml-[7px] mr-[19px] shrink-0" fill="none" stroke="#56b9f7" strokeWidth="3.4">
              <circle cx="22" cy="22" r="20" />
              <ellipse cx="22" cy="22" rx="10" ry="20" />
              <path d="M22 2v40M4 14h36M4 30h36M2 22h40" />
            </svg>
            <h1 className="text-[44px] leading-none font-bold tracking-[-0.65px] whitespace-nowrap">Real-Time Cyber Attack Threat Map</h1>
          </div>
          <div className="mt-[7px] grid grid-cols-[485px_319px_320px_1fr] gap-4">
            {metrics.map(([label, value]) => (
              <div key={label}>
                <div className="h-5 leading-5 text-[14px] tracking-[-0.25px]">{label}</div>
                <div className="h-[52px] leading-[52px] text-[36px] tracking-[-1.2px]">{value}</div>
              </div>
            ))}
          </div>
          <div className="mt-[50px] h-px bg-[#3d3f46]" />
          <div className="mt-8 flex">
            <WorldMap />
            <div className="ml-[30px] pt-[4px] text-[12px] tracking-[-0.2px] whitespace-nowrap">
              <div className="h-4 leading-4">Severity</div>
              <div className="mt-[1px] h-5 flex items-center">
                <span className="ml-[11px] mr-[15px] w-3 h-3 rounded-full bg-[#b80c09]" />
                High
              </div>
              <div className="h-[18px] flex items-center">
                <span className="ml-[11px] mr-[15px] w-3 h-3 rounded-full bg-[#b87a0c]" />
                Medium
              </div>
            </div>
          </div>
        </main>
      </div>
    </div>
  );
}
